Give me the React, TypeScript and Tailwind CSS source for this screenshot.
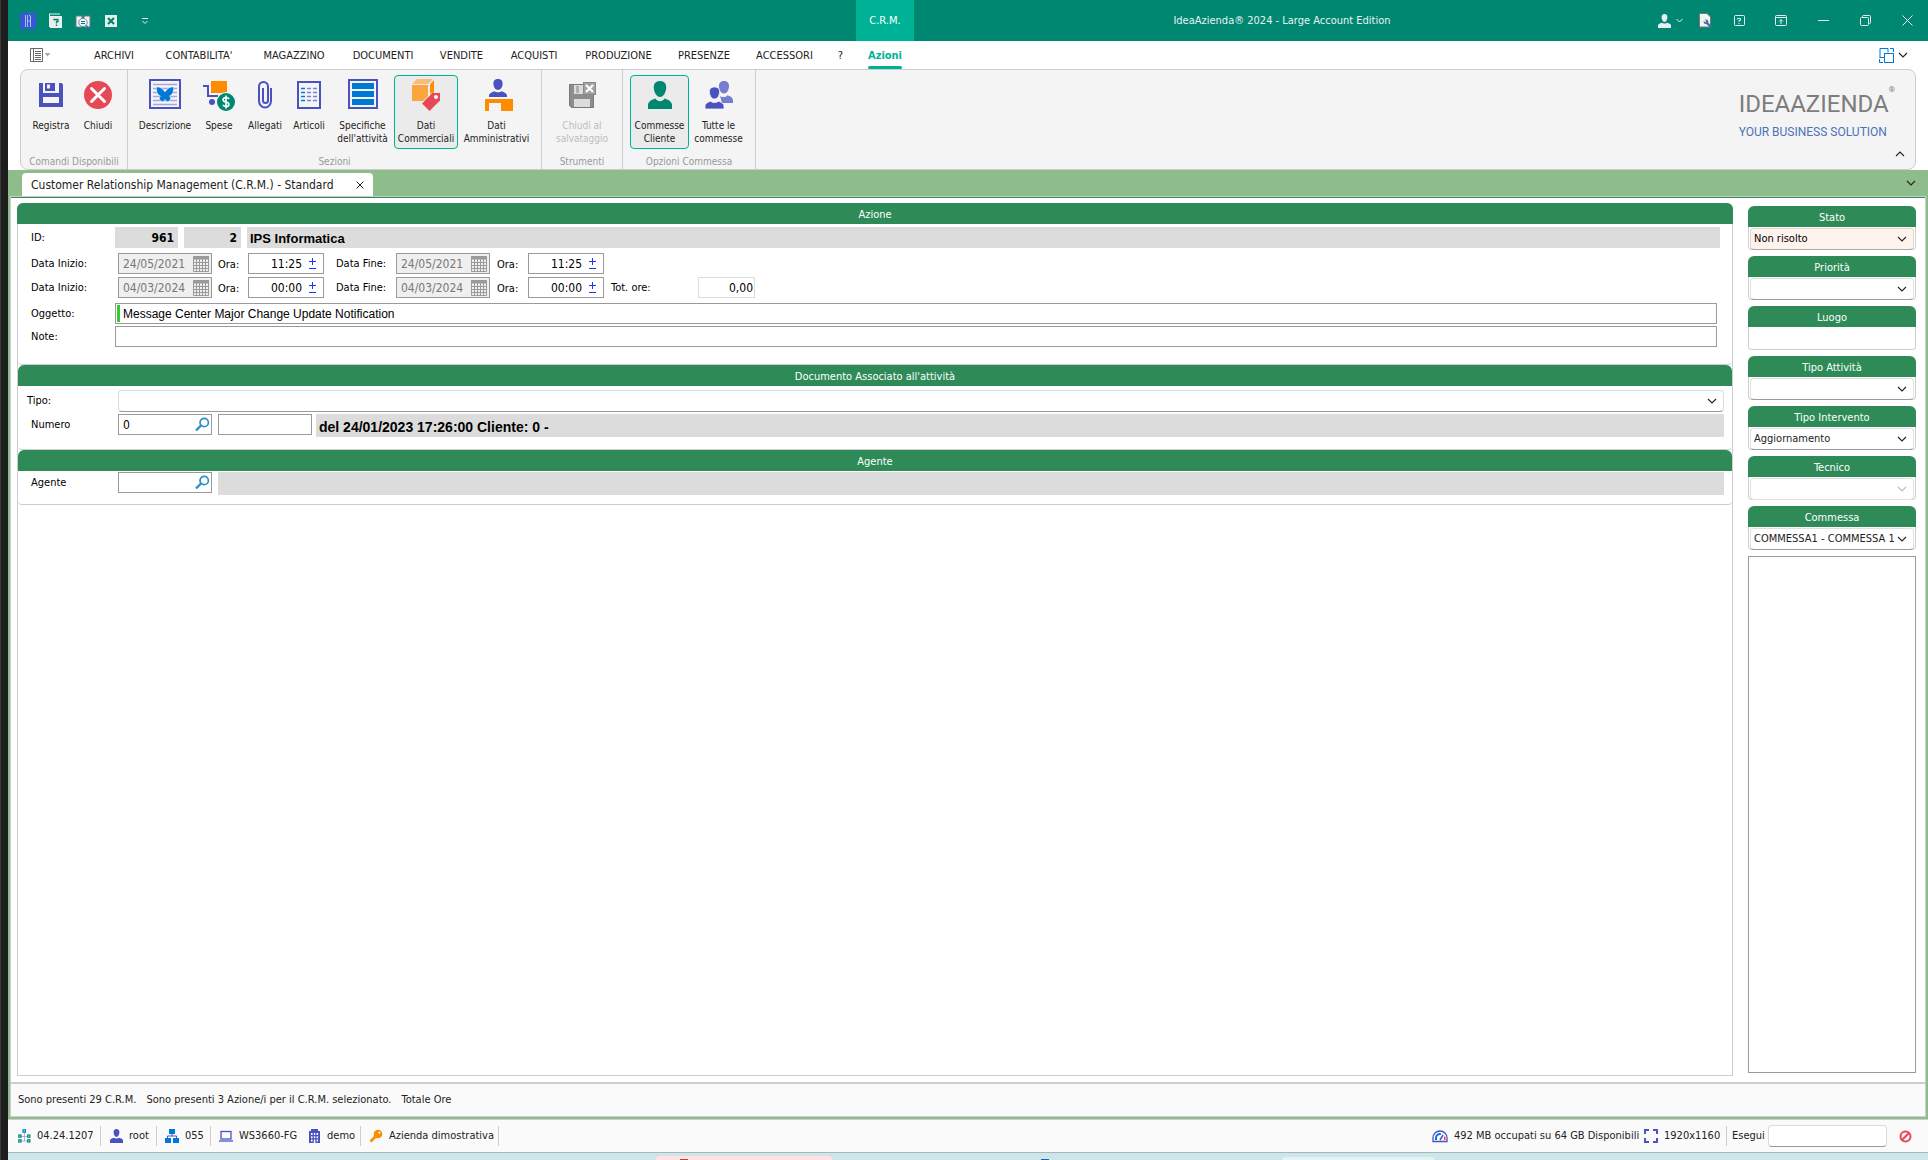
import type { ReactNode } from 'react';

function Chevron({ className = 'text-[#222]' }: { className?: string }) {
  return (
    <svg width="10" height="10" viewBox="0 0 10 10" fill="none" stroke="currentColor" strokeWidth="1.1" className={className}>
      <path d="M1 3l4 4 4-4" />
    </svg>
  );
}

/* ---------- title bar icons ---------- */

const LogoIcon = () => (
  <svg width="16" height="16" viewBox="0 0 16 16" fill="none">
    <rect width="16" height="16" fill="#3558d6" />
    <path d="M5.500 2v12M7.500 2v12M10.500 14V4q0-2-1.500-2M10.500 3v11M8 8h2" stroke="#b9c6f3" strokeWidth=".9" />
  </svg>
);
const HelpBookIcon = () => (
  <svg width="14" height="16" viewBox="0 0 14 16" fill="none">
    <path d="M0 1h11M.5 1v13" stroke="#e8efee" />
    <rect x="1" y="3" width="12" height="12" fill="#e8efee" />
    <path d="M5 7.500V6.500h4v2H7.500v2M7.500 11.500v1.500" stroke="#00866f" strokeWidth="1.300" />
  </svg>
);
const SearchBookIcon = () => (
  <svg width="16" height="16" viewBox="0 0 16 16" fill="none">
    <path d="M1 3h6v11H1zM9 3h6v11H9z" fill="#f2f2f2" stroke="#777" />
    <circle cx="8" cy="9.500" r="4.200" fill="#eef6f5" stroke="#5b8fc0" />
    <path d="M6 8.500h4M6 10.500h4" stroke="#00866f" />
    <path d="M11 12.500l3 3" stroke="#2f6fb3" strokeWidth="1.600" />
  </svg>
);
const CloseBoxIcon = () => (
  <svg width="12" height="12" viewBox="0 0 12 12">
    <rect width="12" height="12" fill="#e8efee" />
    <path d="M3 3l6 6M9 3L3 9" stroke="#00866f" strokeWidth="2.200" />
  </svg>
);
const QuickIcon = () => (
  <svg width="8" height="8" viewBox="0 0 8 8" fill="none" stroke="#e8efee">
    <path d="M1 1.500h6M1.500 4l2.500 2.500L6.500 4" />
  </svg>
);
const PersonIcon = ({ className = '' }: { className?: string }) => (
  <svg width="13" height="14" viewBox="0 0 13 14" fill="currentColor" className={className}>
    <path d="M6.500 0C8.500 0 9.600 1.400 9.400 3.600 9.300 5.700 8.200 8 6.500 8S3.700 5.700 3.600 3.600C3.400 1.400 4.500 0 6.500 0zM0 14v-2.500c0-1.500 2-2.200 4-2.800 1 1 4 1 5 0 2 .6 4 1.300 4 2.800V14z" />
  </svg>
);
const DocToolIcon = () => (
  <svg width="13" height="15" viewBox="0 0 13 15" fill="none">
    <path d="M.500.500h7.500l3.500 3.500v10H.500z" fill="#f3f3f3" stroke="#777" />
    <path d="M6.500 8.500l5.500 5.500" stroke="#3a72b0" strokeWidth="2.400" />
    <circle cx="7" cy="8.800" r="2.400" fill="#3a72b0" />
    <path d="M4.500 6.500l2.300 2.300" stroke="#f3f3f3" strokeWidth="1.500" />
  </svg>
);
const HelpIcon = () => (
  <svg width="11" height="11" viewBox="0 0 11 11" fill="none" stroke="#e8efee">
    <rect x=".5" y=".5" width="10" height="10" rx="1" />
    <path d="M3.500 4.500v-1h3v2h-1.500v1.500M5 8v1" />
  </svg>
);
const RibbonModeIcon = () => (
  <svg width="12" height="11" viewBox="0 0 12 11" fill="none" stroke="#e8efee">
    <rect x=".5" y=".5" width="11" height="10" rx="1" />
    <path d="M.5 2.500h11M6 9V4.500M4 6.500l2-2 2 2" />
  </svg>
);
const MinimizeIcon = () => (
  <svg width="11" height="11" viewBox="0 0 11 11"><path d="M0 5.500h11" stroke="#e8efee" /></svg>
);
const RestoreIcon = () => (
  <svg width="11" height="11" viewBox="0 0 11 11" fill="none" stroke="#e8efee">
    <rect x=".5" y="2.500" width="8" height="8" rx="1" />
    <path d="M2.500 2.500v-1q0-1 1-1h6q1 0 1 1v6q0 1-1 1h-1" />
  </svg>
);
const CloseIcon = ({ className = '' }: { className?: string }) => (
  <svg width="11" height="11" viewBox="0 0 11 11" stroke="currentColor" className={className}>
    <path d="M.5.500l10 10M10.500.500l-10 10" />
  </svg>
);

/* ---------- ribbon icons ---------- */

const SaveIcon = () => (
  <svg width="32" height="32" viewBox="0 0 32 32" fill="#4a52c0">
    <path d="M4 4h4v10h16V4h2.500L28 5.500V28H4z" />
    <path d="M8 18h16v6H8z" fill="#f4f4f4" />
    <path d="M10 4h10v8H10z" />
    <path d="M12 5.500h3v4h-3z" fill="#f4f4f4" />
  </svg>
);
const CancelIcon = () => (
  <svg width="32" height="32" viewBox="0 0 32 32">
    <circle cx="16" cy="16" r="14" fill="#e74856" />
    <path d="M9.500 9.500l13 13M22.500 9.500l-13 13" stroke="#fff" strokeWidth="3" strokeLinecap="round" />
  </svg>
);
const DescriptionIcon = () => (
  <svg width="32" height="32" viewBox="0 0 32 32">
    <rect x="1" y="1" width="30" height="28" fill="#f4f4f4" stroke="#4a52c0" strokeWidth="2" />
    <path d="M4 5.500h24M4 9.500h24M4 13.500h24M4 17.500h24M4 21.500h24M4 25.500h24" stroke="#a4a8df" strokeWidth="1.500" />
    <path d="M7.500 8c3-.5 6.500 1.500 8 4.500h1c1.500-3 5-5 8-4.500.5 4-1 8-4 9 2 1.500 1 5.500-2 5.500-1 0-2-.8-2.500-2-.5 1.200-1.500 2-2.500 2-3 0-4-4-2-5.500-3-1-4.500-5-4-9z" fill="#0078d7" stroke="#f4f4f4" strokeWidth=".6" />
  </svg>
);
const ExpensesIcon = () => (
  <svg width="32" height="32" viewBox="0 0 32 32" fill="none">
    <path d="M0 7h5v10h10" stroke="#4a52c0" strokeWidth="2" />
    <rect x="8" y="2" width="16" height="12" fill="#ff8c00" />
    <circle cx="9" cy="23" r="3" fill="#4a52c0" />
    <circle cx="23" cy="23" r="10" fill="#f4f4f4" />
    <circle cx="23" cy="23" r="9" fill="#008772" />
    <path d="M26 20q-.8-1.500-3-1.500c-4 0-3.800 4 0 4.500s3.800 4.500 0 4.500q-2.500 0-3-1.800M23 16.500v13" stroke="#fff" strokeWidth="1.700" />
  </svg>
);
const AttachIcon = () => (
  <svg width="32" height="32" viewBox="0 0 32 32" fill="none" stroke="#4a52c0" strokeWidth="2">
    <path d="M22 9v13a6 6.500 0 0 1-12 0V7.500a4.500 4.500 0 0 1 9 0v14a2.500 2.500 0 0 1-5 0V9" />
  </svg>
);
const ItemsIcon = () => (
  <svg width="32" height="32" viewBox="0 0 32 32" fill="none">
    <rect x="5" y="3" width="22" height="26" stroke="#4a52c0" strokeWidth="2" />
    <path d="M8 9.500h4M8 13.500h4M8 17.500h4M8 21.500h4" stroke="#0078d7" strokeWidth="1.500" />
    <path d="M14 9.500h4M14 13.500h4M14 17.500h4M14 21.500h4M20 9.500h4M20 13.500h4M20 17.500h4M20 21.500h4" stroke="#7a80d2" strokeWidth="1.500" />
  </svg>
);
const SpecsIcon = () => (
  <svg width="32" height="32" viewBox="0 0 32 32">
    <rect x="2" y="1" width="28" height="28" fill="#f4f4f4" stroke="#4a52c0" strokeWidth="2" />
    <path d="M5 4h22v6H5zM5 12h22v6H5zM5 20h22v6H5z" fill="#0078d7" />
  </svg>
);
const CommercialIcon = () => (
  <svg width="32" height="32" viewBox="0 0 32 32">
    <path d="M2 6h16v16H2z" fill="#faa63c" />
    <path d="M7 0h16l-5 5H2z" fill="#f7bd76" />
    <path d="M24 1v13l-4 3V5.500z" fill="#ff8c00" />
    <path d="M22.500 14H30v7.500L19.500 32 12 24.500z" fill="#e74856" />
    <path d="M11.500 24L22 13.500" stroke="#ebebeb" />
    <circle cx="26" cy="18" r="2" fill="#fff" />
  </svg>
);
const DeskIcon = () => (
  <svg width="32" height="32" viewBox="0 0 32 32">
    <path d="M17 0c3.500 0 4.800 2.200 4.600 5-.2 3-2 6-4.600 6s-4.400-3-4.600-6C12.200 2.200 13.500 0 17 0zM8 18v-1.500c0-2 3-3.500 5.500-4.300 1.500 1.500 5.500 1.500 7 0C23 13 26 14.500 26 16.500V18z" fill="#4a52c0" />
    <path d="M4 20h28v12H20v-8h-12v8H4z" fill="#ff8c00" />
  </svg>
);
const SaveCloseIcon = () => (
  <svg width="32" height="32" viewBox="0 0 32 32">
    <path d="M3.500 5.500h22l2 2v21h-22l-2-2z" fill="#8d8d8d" stroke="#777" />
    <path d="M8 6h10v9H8zM8 20h16v8H8z" fill="#dcdcdc" />
    <path d="M10 7h3v7h-3z" fill="#b0b0b0" />
    <rect x="17.500" y="3.500" width="12" height="12" fill="#a2a2a2" stroke="#8a8a8a" />
    <path d="M20 6l7 7M27 6l-7 7" stroke="#fff" strokeWidth="2.200" />
  </svg>
);
const CustomerIcon = () => (
  <svg width="32" height="32" viewBox="0 0 32 32" fill="#008772">
    <path d="M16 2c4.500 0 6.500 3 6.200 7-.3 4.500-2.700 9-6.200 9s-5.900-4.500-6.200-9C9.500 5 11.500 2 16 2zM4 30v-4c0-3.500 4-5.500 7.500-6.500 1 2 3 2.700 4.500 2.700s3.500-.7 4.500-2.700C24 20.500 28 22.500 28 26v4z" />
  </svg>
);
const AllOrdersIcon = () => (
  <svg width="32" height="32" viewBox="0 0 32 32" fill="#4a52c0">
    <path d="M21 2c3.800 0 5.300 2.500 5 5.500-.2 3.500-2 7-5 7s-4.800-3.500-5-7C15.700 4.500 17.200 2 21 2zM17 17c1.500 1.500 6 1.500 7.500-.8C27 17.200 30 18.500 30 21v3H19z" fill="#777dcf" />
    <path d="M11.500 8c3.800 0 5.300 2.300 5 5.300-.2 3.500-2 6.700-5 6.700s-4.800-3.200-5-6.700C6.200 10.300 7.700 8 11.500 8zM2 30v-3c0-2.500 3-4 5.700-4.800 1.500 1.800 6.100 1.800 7.600 0C18 23 21 24.500 21 27v3z" stroke="#f4f4f4" strokeWidth=".8" />
  </svg>
);

/* ---------- status icons ---------- */

const VersionIcon = () => (
  <svg width="13" height="14" viewBox="0 0 13 14" fill="none" stroke="#008772" strokeWidth="1.200">
    <path d="M6.500 4v8M2 7.500h9M3.200 12h6.300" stroke="#9aa0dc" strokeWidth=".8" />
    <rect x="5" y=".8" width="2.400" height="2.400" stroke="#0078d7" />
    <rect x=".8" y="6" width="2.200" height="2.200" fill="#fafafa" />
    <rect x="9.700" y="6" width="2.200" height="2.200" fill="#fafafa" />
    <rect x=".8" y="10.800" width="2.200" height="2.200" fill="#fafafa" />
    <rect x="9.700" y="10.800" width="2.200" height="2.200" fill="#fafafa" />
  </svg>
);
const NetworkIcon = () => (
  <svg width="14" height="14" viewBox="0 0 14 14" fill="#0078d7">
    <path d="M4 0h6v5H4zM0 9h6v5H0zM8 9h6v5H8z" />
    <path d="M7 5v2M2.500 9V7h9v2" fill="none" stroke="#4a52c0" />
  </svg>
);
const LaptopIcon = () => (
  <svg width="14" height="14" viewBox="0 0 14 14" fill="none" stroke="#4a52c0" strokeWidth="1.300">
    <rect x="2" y="2.500" width="10" height="7.500" />
    <path d="M0 12h14" />
  </svg>
);
const BuildingIcon = () => (
  <svg width="13" height="14" viewBox="0 0 13 14" fill="#4a52c0">
    <path d="M3 0h7v2h2v12H1V2h2z" />
    <path d="M3 4h1.500v2H3zM5.800 4h1.500v2H5.800zM8.600 4h1.500v2H8.600zM3 7.200h1.500v2H3zM5.800 7.200h1.500v2H5.800zM8.600 7.200h1.500v2H8.600zM3 10.400h1.500v2H3zM5.800 10.400h1.500V14H5.800zM8.600 10.400h1.500v2H8.600z" fill="#fafafa" />
  </svg>
);
const KeyIcon = () => (
  <svg width="14" height="14" viewBox="0 0 14 14" fill="none">
    <circle cx="9" cy="5" r="4.300" fill="#ff8c00" />
    <circle cx="10.300" cy="3.800" r="1.100" fill="#fafafa" />
    <path d="M7 7l-5.500 5.500" stroke="#ff8c00" strokeWidth="2.600" />
  </svg>
);
const GaugeIcon = () => (
  <svg width="16" height="14" viewBox="0 0 16 14" fill="none">
    <path d="M1 12.500V9a7 7 0 0 1 14 0v3.500z" fill="#fff" stroke="#4a52c0" strokeWidth="1.300" />
    <path d="M4 11V9a4 4 0 0 1 5-3.900" stroke="#0078d7" strokeWidth="2" />
    <path d="M12.700 7.500V11" stroke="#e74856" strokeWidth="1.600" />
    <path d="M8 11l3-5" stroke="#4a52c0" strokeWidth="1.500" />
  </svg>
);
const ScreenIcon = () => (
  <svg width="14" height="14" viewBox="0 0 14 14" fill="none" stroke="#4a52c0" strokeWidth="2">
    <path d="M1 5V1h4M9 1h4v4M13 9v4H9M5 13H1V9" />
  </svg>
);
const ForbiddenIcon = () => (
  <svg width="13" height="13" viewBox="0 0 13 13" fill="none" stroke="#e74856" strokeWidth="2">
    <circle cx="6.500" cy="6.500" r="5" />
    <path d="M10 3l-7 7" />
  </svg>
);
const CalendarIcon = () => (
  <svg width="16" height="16" viewBox="0 0 16 16" fill="none" stroke="#9a9a9a">
    <path d="M.5.500h15v15H.5zM.5 6.500h15M.5 9.500h15M.5 12.500h15M3.500 3v12M6.500 3v12M9.500 3v12M12.500 3v12" />
    <path d="M0 2h16" strokeWidth="3" />
  </svg>
);
const LensIcon = () => (
  <svg width="15" height="15" viewBox="0 0 15 15" fill="none" stroke="#2f8fc6">
    <circle cx="9.200" cy="5.500" r="4.200" strokeWidth="1.700" />
    <path d="M6 8.500l-5 5" strokeWidth="2.400" />
  </svg>
);
const PlusMinusIcon = () => (
  <svg width="7" height="12" viewBox="0 0 7 12" stroke="#1a35ff">
    <path d="M0 3.500h7M3.500 0v7M0 10.500h7" />
  </svg>
);

/* ---------- ribbon ---------- */

function RibbonButton({ icon, lines, width, active, disabled }: { icon: ReactNode; lines: string[]; width: string; active?: boolean; disabled?: boolean }) {
  return (
    <button
      type="button"
      disabled={disabled}
      className={`flex h-[74px] shrink-0 flex-col items-center rounded border pt-[3px] text-[10px] leading-[13px] whitespace-nowrap ${width} ${
        active ? 'border-[#00b295] bg-[#ebebeb]' : 'border-transparent'
      } ${disabled ? 'text-[#bdbdbd]' : 'text-[#222]'}`}
    >
      {icon}
      <span className="mt-2">
        {lines.map((l) => (
          <span key={l} className="block">{l}</span>
        ))}
      </span>
    </button>
  );
}

function RibbonGroup({ caption, className = '', children }: { caption: string; className?: string; children: ReactNode }) {
  return (
    <div className="flex flex-col border-r border-[#cdcdcd] pt-[5px]">
      <div className={`flex ${className}`}>{children}</div>
      <p className="mt-[5px] text-center text-[10px] leading-4 whitespace-nowrap text-[#999]">{caption}</p>
    </div>
  );
}

/* ---------- form ---------- */

function GroupTitle({ children }: { children: ReactNode }) {
  return <h2 className="h-[21px] rounded-t-md bg-[#2e8b57] text-center leading-[23px] text-white">{children}</h2>;
}

function DateField({ id, value }: { id: string; value: string }) {
  return (
    <span className="flex h-[21px] w-[94px] items-center justify-between border border-[#9a9a9a] bg-[#efefef] pr-0.5 pl-1">
      <input id={id} disabled value={value} readOnly className="w-[68px] bg-transparent text-xs text-[#777]" />
      <CalendarIcon />
    </span>
  );
}

function TimeField({ id, value }: { id: string; value: string }) {
  return (
    <span className="flex h-[21px] w-[76px] items-center border border-[#9a9a9a] bg-white pr-[7px]">
      <input id={id} defaultValue={value} className="w-full min-w-0 flex-1 text-right text-xs text-black" />
      <button type="button" aria-label="Modifica ora" className="ml-[7px]"><PlusMinusIcon /></button>
    </span>
  );
}

function DateRow({ n, date, time, children }: { n: number; date: string; time: string; children?: ReactNode }) {
  return (
    <div className="flex items-center">
      <label htmlFor={`start${n}`} className="w-[87px]">Data Inizio:</label>
      <DateField id={`start${n}`} value={date} />
      <label htmlFor={`startTime${n}`} className="w-[36px] pt-0.5 pl-1.5">Ora:</label>
      <TimeField id={`startTime${n}`} value={time} />
      <label htmlFor={`end${n}`} className="w-[72px] pl-3">Data Fine:</label>
      <DateField id={`end${n}`} value={date} />
      <label htmlFor={`endTime${n}`} className="w-[38px] pt-0.5 pl-[7px]">Ora:</label>
      <TimeField id={`endTime${n}`} value={time} />
      {children}
    </div>
  );
}

function LookupField({ id, value }: { id: string; value: string }) {
  return (
    <span className="flex h-[21px] w-[94px] shrink-0 items-center border border-[#9a9a9a] bg-white pr-px pl-1">
      <input id={id} defaultValue={value} className="min-w-0 flex-1 text-xs text-black" />
      <button type="button" aria-label="Cerca"><LensIcon /></button>
    </span>
  );
}

function SelectField({ id, value, className, disabled }: { id: string; value: string; className: string; disabled?: boolean }) {
  return (
    <div className="relative flex-1">
      <select id={id} disabled={disabled} className={`block h-[22px] w-full appearance-none rounded border pl-[3px] opacity-100 ${className}`}>
        <option>{value}</option>
      </select>
      <Chevron className={`pointer-events-none absolute top-1.5 right-[7px] ${disabled ? 'text-[#bbb]' : 'text-[#222]'}`} />
    </div>
  );
}

type Side = { id: string; title: string; value: string; kind: 'select' | 'text'; tint?: boolean; disabled?: boolean };
const sideFields: Side[] = [
  { id: 'stato', title: 'Stato', value: 'Non risolto', kind: 'select', tint: true },
  { id: 'priorita', title: 'Priorità', value: '', kind: 'select' },
  { id: 'luogo', title: 'Luogo', value: '', kind: 'text' },
  { id: 'tipoAttivita', title: 'Tipo Attività', value: '', kind: 'select' },
  { id: 'tipoIntervento', title: 'Tipo Intervento', value: 'Aggiornamento', kind: 'select' },
  { id: 'tecnico', title: 'Tecnico', value: '', kind: 'select', disabled: true },
  { id: 'commessa', title: 'Commessa', value: 'COMMESSA1 - COMMESSA 1', kind: 'select' },
];

function SideField({ f }: { f: Side }) {
  return (
    <div className="mb-1.5">
      <label htmlFor={f.id} className="block h-[21px] rounded-t-md bg-[#2e8b57] text-center leading-[23px] text-white">{f.title}</label>
      <div className="flex h-[23px] rounded-b border border-t-0 border-[#cfcfcf] px-px pt-px">
        {f.kind === 'text' ? (
          <input id={f.id} className="w-full px-1" />
        ) : (
          <SelectField
            id={f.id}
            value={f.value}
            disabled={f.disabled}
            className={
              f.tint
                ? 'border-[#e3d6cf] border-b-[#aaa] bg-[#fff3ee] text-black'
                : f.disabled
                  ? 'border-[#e0e0e0] bg-white text-black'
                  : 'border-[#e0e0e0] border-b-[#9a9a9a] bg-white text-[#222]'
            }
          />
        )}
      </div>
    </div>
  );
}

const menu: [string, string][] = [
  ['ARCHIVI', 'w-[70px]'],
  ["CONTABILITA'", 'w-[100px]'],
  ['MAGAZZINO', 'w-[90px]'],
  ['DOCUMENTI', 'w-[88px]'],
  ['VENDITE', 'w-[69px]'],
  ['ACQUISTI', 'w-[76px]'],
  ['PRODUZIONE', 'w-[93px]'],
  ['PRESENZE', 'w-[78px]'],
  ['ACCESSORI', 'w-[83px]'],
  ['?', 'w-[29px]'],
];

function StatusItem({ icon, children, width, divider }: { icon: ReactNode; children: ReactNode; width: string; divider?: boolean }) {
  return (
    <span className={`flex h-5 items-center gap-1.5 whitespace-nowrap ${width} ${divider ? 'border-r border-[#cdcdcd]' : ''}`}>
      {icon}
      {children}
    </span>
  );
}

export default function App() {
  return (
    <div className="flex min-h-screen bg-[#1e1e1e] font-['DejaVu_Sans_Condensed','DejaVu_Sans',sans-serif] text-[11px] leading-4 text-black">
      <div className="w-2 shrink-0 border-l border-[#3a3a3a] bg-[#1e1e1e]" />
      <div className="flex min-w-0 flex-1 flex-col bg-white">
        <header className="flex h-[41px] items-stretch bg-[#008772] text-white">
          <div className="flex w-[848px] items-center pl-3">
            <LogoIcon />
            <button type="button" aria-label="Guida" className="ml-[13px]"><HelpBookIcon /></button>
            <button type="button" aria-label="Cerca" className="ml-3"><SearchBookIcon /></button>
            <button type="button" aria-label="Chiudi scheda" className="ml-3.5"><CloseBoxIcon /></button>
            <button type="button" aria-label="Personalizza" className="ml-6"><QuickIcon /></button>
          </div>
          <div className="flex w-[58px] items-center justify-center bg-[#00b295]">C.R.M.</div>
          <h1 className="flex flex-1 items-center justify-center pt-px pr-2 text-[#e8f4f1]">IdeaAzienda® 2024 - Large Account Edition</h1>
          <div className="flex items-center pr-[15px]">
            <button type="button" aria-label="Utente" className="flex items-center gap-[5px] text-[#e8efee]">
              <PersonIcon />
              <svg width="7" height="5" viewBox="0 0 7 5" fill="none" stroke="currentColor"><path d="M.5 1l3 3 3-3" /></svg>
            </button>
            <button type="button" aria-label="Impostazioni" className="ml-4"><DocToolIcon /></button>
            <button type="button" aria-label="Aiuto" className="ml-[22px]"><HelpIcon /></button>
            <button type="button" aria-label="Opzioni barra" className="ml-[30px]"><RibbonModeIcon /></button>
            <button type="button" aria-label="Riduci" className="ml-[31px]"><MinimizeIcon /></button>
            <button type="button" aria-label="Ripristina" className="ml-[31px]"><RestoreIcon /></button>
            <button type="button" aria-label="Chiudi" className="ml-[31px]"><CloseIcon className="text-[#e8efee]" /></button>
          </div>
        </header>

        <nav className="flex h-7 items-stretch">
          <button type="button" aria-label="Menu" className="flex w-[71px] items-center gap-px pl-[22px]">
            <svg width="13" height="14" viewBox="0 0 13 14" fill="none" stroke="#666">
              <path d="M.5.500h12v13H.5zM3.500.500v13M5 3.500h6M5 5.500h6M5 7.500h6M5 9.500h6M5 11.500h6" />
            </svg>
            <svg width="7" height="4" viewBox="0 0 7 4"><path d="M.5 0h6l-3 3.500z" fill="#aaa" /></svg>
          </button>
          {menu.map(([t, w]) => (
            <a key={t} href="#" className={`flex items-center justify-center pt-0.5 text-[#222] ${w}`}>{t}</a>
          ))}
          <a href="#" className="ml-px flex w-[58px] flex-col items-center justify-between pt-[7px] font-bold text-[#00b295]">
            Azioni
            <span className="h-[3px] w-[34px] rounded-sm bg-[#00b295]" />
          </a>
          <button type="button" aria-label="Layout" className="mr-5 ml-auto flex items-center gap-1">
            <svg width="15" height="15" viewBox="0 0 15 15" fill="none" stroke="#0078d7">
              <path d="M1 9.500V.500h8v4M5.500 9.500h-5M11 .500h3.500V4M.5 11v3.500H4" />
              <rect x="5.500" y="5.500" width="9" height="9" />
            </svg>
            <Chevron />
          </button>
        </nav>

        <div className="mr-3 ml-3 flex h-[101px] rounded-lg border border-[#cdcdcd] bg-[#f4f4f4]">
          <RibbonGroup caption="Comandi Disponibili" className="px-1.5">
            <RibbonButton icon={<SaveIcon />} lines={['Registra']} width="w-[48px]" />
            <RibbonButton icon={<CancelIcon />} lines={['Chiudi']} width="w-[46px]" />
          </RibbonGroup>
          <RibbonGroup caption="Sezioni" className="pr-[6px] pl-[7px]">
            <RibbonButton icon={<DescriptionIcon />} lines={['Descrizione']} width="w-[60px]" />
            <RibbonButton icon={<ExpensesIcon />} lines={['Spese']} width="w-[48px]" />
            <RibbonButton icon={<AttachIcon />} lines={['Allegati']} width="w-[44px]" />
            <RibbonButton icon={<ItemsIcon />} lines={['Articoli']} width="w-[44px]" />
            <RibbonButton icon={<SpecsIcon />} lines={['Specifiche', "dell'attività"]} width="w-[63px]" />
            <RibbonButton icon={<CommercialIcon />} lines={['Dati', 'Commerciali']} width="w-[64px]" active />
            <RibbonButton icon={<DeskIcon />} lines={['Dati', 'Amministrativi']} width="w-[77px]" />
          </RibbonGroup>
          <RibbonGroup caption="Strumenti" className="px-0.5">
            <RibbonButton icon={<SaveCloseIcon />} lines={['Chiudi al', 'salvataggio']} width="w-[76px]" disabled />
          </RibbonGroup>
          <RibbonGroup caption="Opzioni Commessa" className="px-[7px]">
            <RibbonButton icon={<CustomerIcon />} lines={['Commesse', 'Cliente']} width="w-[59px]" active />
            <RibbonButton icon={<AllOrdersIcon />} lines={['Tutte le', 'commesse']} width="w-[59px]" />
          </RibbonGroup>
          <div className="ml-auto pt-4 font-[Roboto,sans-serif]">
            <p className="flex text-[24px] leading-[36px] text-[#7d7d7d]">
              IDEAAZIENDA<sup className="text-[8px] leading-4">®</sup>
            </p>
            <p className="text-[12px] leading-5 text-[#4a72b8]">YOUR BUSINESS SOLUTION</p>
          </div>
          <button type="button" aria-label="Comprimi" className="mr-2.5 mb-2.5 self-end"><Chevron className="rotate-180 text-[#222]" /></button>
        </div>

        <div className="flex h-[26px] items-end justify-between bg-[#8fbc8b] pr-[12px] pl-3.5">
          <div className="flex h-[23px] w-[351px] items-center justify-between rounded-t bg-white pr-[9px] pl-[9px] text-xs text-[#222]">
            Customer Relationship Management (C.R.M.) - Standard
            <button type="button" aria-label="Chiudi scheda">
              <svg width="8" height="8" viewBox="0 0 8 8" stroke="#222"><path d="M.5.500l7 7M7.500.500l-7 7" /></svg>
            </button>
          </div>
          <button type="button" aria-label="Elenco schede" className="mb-2"><Chevron /></button>
        </div>

        <div className="flex flex-1 flex-col border-x-2 border-b-2 border-[#8fbc8b]">
          <div className="flex flex-1 flex-col border border-[#cdcdcd]">
            <main className="flex flex-1 gap-[15px] border-t border-t-[#2e8b57] bg-white pr-[9px] pl-1.5">
              <section className="mt-[5px] mb-1.5 flex min-w-0 flex-1 flex-col rounded-t-md border border-t-0 border-[#cdcdcd]">
                <div className="-mx-px"><GroupTitle>Azione</GroupTitle></div>
                <div className="flex h-[141px] flex-col rounded-b border-b border-[#cdcdcd] pt-[3px] pr-3 pl-[13px]">
                  <div className="flex h-[21px] items-center">
                    <span className="w-[84px]">ID:</span>
                    <span className="h-[21px] w-[63px] bg-[#dcdcdc] pr-1 text-right text-xs leading-[22px] font-bold">961</span>
                    <span className="ml-1.5 h-[21px] w-[57px] bg-[#dcdcdc] pr-1 text-right text-xs leading-[22px] font-bold">2</span>
                    <span className="ml-1.5 h-[21px] flex-1 bg-[#dcdcdc] pl-[3px] font-['Liberation_Sans',sans-serif] text-[13px] leading-[23px] font-bold">IPS Informatica</span>
                  </div>
                  <div className="mt-[5px] flex flex-col gap-[3px]">
                    <DateRow n={1} date="24/05/2021" time="11:25" />
                    <DateRow n={2} date="04/03/2024" time="00:00">
                      <label htmlFor="tot" className="w-[94px] pl-[7px]">Tot. ore:</label>
                      <input id="tot" defaultValue="0,00" className="h-[21px] w-[57px] border border-[#dcdcdc] pr-px text-right text-xs" />
                    </DateRow>
                  </div>
                  <div className="mt-[5px] flex items-center pr-[3px]">
                    <label htmlFor="oggetto" className="w-[84px]">Oggetto:</label>
                    <span className="flex h-[21px] flex-1 items-center border border-[#9a9a9a] p-px">
                      <span className="h-full w-[3px] bg-[#32cd32]" />
                      <input id="oggetto" defaultValue="Message Center Major Change Update Notification" className="flex-1 pl-[3px] font-['Liberation_Sans',sans-serif] text-xs" />
                    </span>
                  </div>
                  <div className="mt-0.5 flex items-center pr-[3px]">
                    <label htmlFor="note" className="w-[84px]">Note:</label>
                    <input id="note" className="h-[21px] flex-1 border border-[#9a9a9a] px-1 text-xs" />
                  </div>
                </div>

                <GroupTitle>Documento Associato all'attività</GroupTitle>
                <div className="flex h-16 flex-col rounded-b border-b border-[#cdcdcd] pt-1 pr-2">
                  <div className="flex h-[22px] items-center">
                    <label htmlFor="tipo" className="w-[100px] pl-[9px]">Tipo:</label>
                    <SelectField id="tipo" value="" className="border-[#dcdcdc] border-b-[#9a9a9a] bg-white" />
                  </div>
                  <div className="mt-0.5 flex h-[23px]">
                    <label htmlFor="numero" className="w-[100px] pt-[3px] pl-[13px]">Numero</label>
                    <LookupField id="numero" value="0" />
                    <input aria-label="Serie" className="ml-1.5 h-[21px] w-[94px] border border-[#9a9a9a] px-1 text-xs" />
                    <span className="ml-1 flex-1 bg-[#dcdcdc] pl-[3px] font-['Liberation_Sans',sans-serif] text-sm leading-[26px] font-bold">del 24/01/2023 17:26:00 Cliente: 0 -</span>
                  </div>
                </div>

                <GroupTitle>Agente</GroupTitle>
                <div className="flex h-[34px] rounded-b border-b border-[#cdcdcd] pt-px pr-2">
                  <label htmlFor="agente" className="w-[100px] pt-[3px] pl-[13px]">Agente</label>
                  <LookupField id="agente" value="" />
                  <span className="ml-1.5 h-[23px] flex-1 bg-[#dcdcdc]" />
                </div>
              </section>

              <aside className="mt-2 mb-[9px] flex w-[168px] shrink-0 flex-col">
                {sideFields.map((f) => <SideField key={f.id} f={f} />)}
                <textarea aria-label="Dettaglio commessa" className="flex-1 resize-none border border-[#9a9a9a]" />
              </aside>
            </main>
            <footer className="flex h-[34px] items-center gap-2.5 border-t-2 border-[#cdcdcd] bg-[#fafafa] pl-[7px] text-[#222]">
              <span>Sono presenti 29 C.R.M.</span>
              <span>Sono presenti 3 Azione/i per il C.R.M. selezionato.</span>
              <span>Totale Ore</span>
            </footer>
          </div>
        </div>

        <div className="flex h-[34px] items-center border-t border-b border-t-[#cdcdcd] border-b-[#a9b5b8] bg-[#fafafa] pl-2.5 text-[#222]">
          <StatusItem icon={<VersionIcon />} width="w-[83px]" divider>04.24.1207</StatusItem>
          <StatusItem icon={<PersonIcon className="ml-[9px] text-[#4a52c0]" />} width="w-[56px]" divider>root</StatusItem>
          <StatusItem icon={<NetworkIcon />} width="w-[54px] pl-2" divider>055</StatusItem>
          <StatusItem icon={<LaptopIcon />} width="w-[89px] pl-2">WS3660-FG</StatusItem>
          <StatusItem icon={<BuildingIcon />} width="w-[61px] pl-2" divider>demo</StatusItem>
          <StatusItem icon={<KeyIcon />} width="w-[138px] pl-2" divider>Azienda dimostrativa</StatusItem>
          <StatusItem icon={<GaugeIcon />} width="ml-auto w-[212px]">492 MB occupati su 64 GB Disponibili</StatusItem>
          <StatusItem icon={<ScreenIcon />} width="w-[83px]" divider>1920x1160</StatusItem>
          <label htmlFor="esegui" className="w-[41px] pl-[5px]">Esegui</label>
          <input id="esegui" className="h-[22px] w-[119px] rounded border border-[#dcdcdc] border-b-[#9a9a9a] bg-white px-1" />
          <button type="button" aria-label="Interrompi" className="mr-4 ml-3"><ForbiddenIcon /></button>
        </div>

        <div className="flex h-[7px] items-end overflow-hidden bg-[#cde6ea]">
          <div className="ml-[648px] h-1 w-[176px] rounded-t bg-[#ffe3e3]">
            <div className="mt-[3px] ml-6 h-px w-2 bg-[#c83c3c]" />
          </div>
          <div className="ml-[209px] h-px w-2 bg-[#1b66b5]" />
          <div className="ml-[233px] h-[3px] w-[152px] rounded-t bg-[#e6f3f5]" />
        </div>
      </div>
    </div>
  );
}
